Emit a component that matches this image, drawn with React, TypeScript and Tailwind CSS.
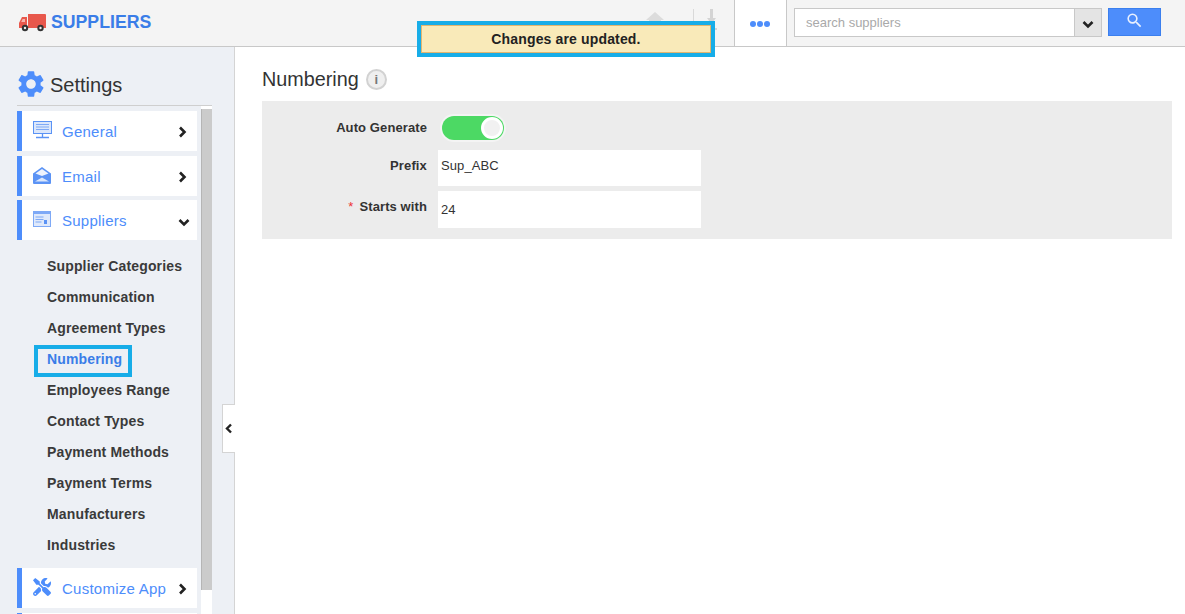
import React from "react";
import { FaTools } from "react-icons/fa";
import { MdSettings, MdSearch } from "react-icons/md";

const Truck = () => (
  <svg width="27" height="19" viewBox="0 0 27 19" className="block">
    <path d="M9 1h17a1 1 0 0 1 1 1v13H9z" fill="#e8584c" />
    <path d="M8 4v11H0V10l3-6z" fill="#e8584c" />
    <path d="M3.6 6H6v3H2.2z" fill="#f6b3ab" />
    <circle cx="6" cy="15" r="3.2" fill="#333" />
    <circle cx="6" cy="15" r="1.2" fill="#eee" />
    <circle cx="21.5" cy="15" r="3.2" fill="#333" />
    <circle cx="21.5" cy="15" r="1.2" fill="#eee" />
  </svg>
);

const Monitor = () => (
  <svg width="19" height="18" viewBox="0 0 19 18" className="block">
    <rect x="0.5" y="0.5" width="18" height="12" fill="#dbe7fb" stroke="#5b93f5" />
    <path d="M3 3.5h13M3 6h13M3 8.5h13" stroke="#7ea9f6" strokeWidth="1.2" />
    <path d="M9.5 13v3M3 16.5h13" stroke="#5b93f5" strokeWidth="1.3" />
  </svg>
);

const Envelope = () => (
  <svg width="18" height="17" viewBox="0 0 18 17" className="block">
    <path d="M0 6.5L9 0l9 6.5V16a1 1 0 0 1-1 1H1a1 1 0 0 1-1-1z" fill="#5b93f5" />
    <path d="M2.5 6.5L9 2l6.5 4.5L9 9z" fill="#eef3fd" />
    <path d="M2 14.5L9 10.5l7 4z" fill="#dbe7fb" />
  </svg>
);

const Page = () => (
  <svg width="18" height="16" viewBox="0 0 18 16" className="block">
    <rect width="18" height="16" fill="#7ea9f6" />
    <rect x="1" y="3" width="16" height="12" fill="#dfe9fb" />
    <path d="M2.5 6h8M2.5 8.5h8M2.5 11h6" stroke="#7ea9f6" strokeWidth="1.2" />
    <path d="M11 9h3v4h-3z" fill="#5b93f5" />
  </svg>
);

const Home = () => (
  <svg width="18" height="17" viewBox="0 0 18 17" className="block">
    <path d="M9 0L0 8h3v9h12V8h3z" fill="#dcdcdc" />
    <path d="M6 9h6v8H6z" fill="#e6e6e6" />
  </svg>
);

const Download = () => (
  <svg width="11" height="22" viewBox="0 0 11 22" className="block">
    <path d="M4 0h3v13H4z" fill="#d4d4d4" />
    <path d="M1 9l4.5 6L10 9z" fill="#d4d4d4" />
    <path d="M0 19h11v2H0z" fill="#d4d4d4" />
  </svg>
);

const ChevR = () => (
  <svg width="9" height="12" viewBox="0 0 9 12" className="block">
    <path d="M2 1.5L6.5 6 2 10.5" fill="none" stroke="#222" strokeWidth="2.6" />
  </svg>
);

const ChevD = () => (
  <svg width="12" height="9" viewBox="0 0 12 9" className="block">
    <path d="M1.5 2L6 6.5 10.5 2" fill="none" stroke="#222" strokeWidth="2.6" />
  </svg>
);

const ChevL = () => (
  <svg width="8" height="11" viewBox="0 0 8 11" className="block">
    <path d="M6 1.5L2 5.5l4 4" fill="none" stroke="#222" strokeWidth="2.4" />
  </svg>
);

function MenuCard({ icon, label, open }: { icon: React.ReactNode; label: string; open?: boolean }) {
  return (
    <div className="flex h-10 items-center border-l-[5px] border-[#4d8dfb] bg-white">
      <div className="flex w-[40px] justify-center pb-[2px]">{icon}</div>
      <span className="pt-[2px] text-[15px] tracking-[0.25px] text-[#4d8dfb]">{label}</span>
      <span className={`ml-auto flex w-[26px] justify-center ${open ? "pr-[1px] pt-[4px]" : "pr-[3px] pt-[2px]"}`}>
        {open ? <ChevD /> : <ChevR />}
      </span>
    </div>
  );
}

const subItems = [
  "Supplier Categories",
  "Communication",
  "Agreement Types",
  "Numbering",
  "Employees Range",
  "Contact Types",
  "Payment Methods",
  "Payment Terms",
  "Manufacturers",
  "Industries",
];

export default function App() {
  return (
    <div className="relative flex h-[614px] w-[1185px] flex-col overflow-hidden bg-white font-['Liberation_Sans',Arial,sans-serif] text-[13px] text-[#333]">
      <header className="flex h-[47px] shrink-0 border-b border-[#c8c8c8] bg-[#f4f4f4]">
        <div className="flex items-center gap-[5px] pl-[19px] pb-[2px]">
          <Truck />
          <span className="text-[17.7px] font-bold text-[#3a7de8]">SUPPLIERS</span>
        </div>
        <div className="ml-auto flex items-center gap-[29px] pb-[6px] pr-[17px]">
          <Home />
          <div className="flex h-[22px] items-end gap-[12px]">
            <div className="h-full w-px bg-[#d9d9d9]" />
            <Download />
          </div>
        </div>
        <div className="flex w-[53px] items-center justify-center gap-[1px] border-x border-[#c8c8c8] bg-white pr-[2px] pt-[1px]">
          <span className="h-[6px] w-[6px] rounded-full bg-[#4d8dfb]" />
          <span className="h-[6px] w-[6px] rounded-full bg-[#4d8dfb]" />
          <span className="h-[6px] w-[6px] rounded-full bg-[#4d8dfb]" />
        </div>
        <div className="ml-[7px] mr-[24px] flex items-start pt-[8px]">
          <div className="flex h-[29px] w-[308px] border border-[#c8c8c8] bg-white">
            <span className="flex-1 pl-[11px] text-[13px] leading-[27px] text-[#a9a9a9]">search suppliers</span>
            <span className="flex w-[27px] items-center justify-center border-l border-[#c8c8c8] bg-[#e4e4e4] pt-[4px]">
              <ChevD />
            </span>
          </div>
          <div className="ml-[6px] flex h-[28px] w-[53px] items-center justify-center border border-[#3b7fee] bg-[#4d8dfb] pb-[3px] text-[#e8f0ff]">
            <MdSearch size={19} />
          </div>
        </div>
      </header>

      <div className="flex min-h-0 flex-1">
        <aside className="flex w-[235px] shrink-0 flex-col border-r border-[#d4d4d4] bg-[#edf0f5] pl-[17px]">
          <div className="flex h-[59px] w-[195px] shrink-0 items-center gap-[3px] border-b border-[#cfcfcf] pt-[17px]">
            <MdSettings size={32} className="-ml-[2px] -mt-[2px] text-[#4d8dfb]" />
            <span className="text-[20px] leading-none text-[#333]">Settings</span>
          </div>
          <div className="flex min-h-0 flex-1">
            <nav className="w-[180px] shrink-0 overflow-hidden pt-[5px]">
              <MenuCard icon={<Monitor />} label="General" />
              <div className="mt-[5px]">
                <MenuCard icon={<Envelope />} label="Email" />
              </div>
              <div className="mt-[4px]">
                <MenuCard icon={<Page />} label="Suppliers" open />
              </div>
              <ul className="pb-[8px] pl-[30px] pt-[10px] text-[14px] font-bold tracking-[0.15px]">
                {subItems.map((s) => (
                  <li key={s} className={`flex h-[31px] items-center pt-[2px] ${s === "Numbering" ? "text-[#3a7de8]" : "text-[#3a3a3a]"}`}>
                    {s}
                  </li>
                ))}
              </ul>
              <MenuCard icon={<FaTools size={18} className="text-[#4d8dfb]" />} label="Customize App" />
              <div className="mt-[5px] h-[10px] border-l-[5px] border-[#4d8dfb] bg-white" />
            </nav>
            <div className="ml-[4px] w-[11px] bg-white pt-[3px]">
              <div className="h-[481px] border-l border-[#b5b5b5] bg-[#cbcbcb]" />
            </div>
          </div>
        </aside>

        <main className="min-w-0 flex-1 pl-[27px] pr-[13px]">
          <div className="flex h-[54px] items-center gap-[7px] pt-[11px]">
            <span className="text-[19.8px] leading-none text-[#333]">Numbering</span>
            <span className="flex h-[21px] w-[21px] items-center justify-center rounded-full border-2 border-[#d2d2d2] bg-[#efefef] text-[13px] font-bold leading-none text-[#777]">
              i
            </span>
          </div>
          <section className="h-[138px] bg-[#ececec] pt-[13px]">
            <div className="flex h-[36px] items-start">
              <label className="w-[165px] pt-[6px] text-right font-bold leading-[15px] tracking-[0.1px]">Auto Generate</label>
              <div className="ml-[13px] h-[28px] w-[66px] rounded-full bg-[#f4f4f4] p-[2px]">
                <div className="flex h-[24px] items-center justify-end rounded-full bg-[#4cd964] pr-[1px]">
                  <span className="h-[22px] w-[22px] rounded-full border-[3px] border-white bg-[#f1f1f1]" />
                </div>
              </div>
            </div>
            <div className="flex h-[41px] items-start">
              <label className="w-[165px] pt-[8px] text-right font-bold leading-[15px] tracking-[0.15px]">Prefix</label>
              <div className="ml-[11px] h-[36px] w-[263px] bg-white pl-[3px] pt-[8px] leading-[15px] tracking-[0.1px] text-[#333]">Sup_ABC</div>
            </div>
            <div className="flex h-[37px] items-start">
              <label className="w-[165px] pt-[8px] text-right font-bold leading-[15px] tracking-[0.1px]">
                <span className="mr-[6px] font-normal text-[#e33]">*</span>
                Starts with
              </label>
              <div className="ml-[11px] h-[37px] w-[263px] bg-white pl-[3px] pt-[11px] leading-[15px] text-[#333]">24</div>
            </div>
          </section>
        </main>
      </div>

      {/* notification toast */}
      <div className="absolute left-[417px] top-[21px] flex h-[36px] w-[298px] items-center justify-center border-[4px] border-[#17ade8]">
        <div className="flex h-full w-full items-center justify-center border border-[#e3b66f] bg-[#f9eab9] text-[14px] font-bold tracking-[0.15px] text-[#222]">
          Changes are updated.
        </div>
      </div>

      {/* highlight around active submenu item */}
      <div className="absolute left-[34px] top-[345px] h-[32px] w-[98px] border-[4px] border-[#17ade8]" />

      {/* sidebar collapse handle */}
      <div className="absolute left-[222px] top-[404px] flex h-[49px] w-[13px] items-center justify-center border border-r-0 border-[#d4d4d4] bg-white">
        <ChevL />
      </div>
    </div>
  );
}
